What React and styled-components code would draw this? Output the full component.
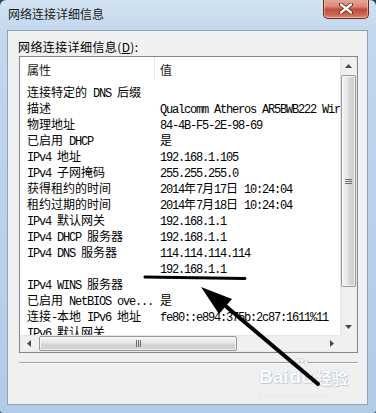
import React from 'react';
import styled, { createGlobalStyle } from 'styled-components';

const CJK = `"Noto Sans CJK SC", "Microsoft YaHei", sans-serif`;
const MONO = `"Liberation Mono", "DejaVu Sans Mono", monospace`;

const GlobalStyle = createGlobalStyle`
  html, body { margin: 0; padding: 0; background: #34414f; }
  body { width: 376px; height: 413px; overflow: hidden; }
`;

const Window = styled.div`
  position: relative;
  width: 376px;
  height: 413px;
  box-sizing: border-box;
  display: flex;
  flex-direction: column;
  background: linear-gradient(180deg, #d4e3f3 0%, #c3d7ed 30px, #b2cbe7 100%);
  border-radius: 6px 6px 3px 3px;
  overflow: hidden;
  font-family: ${CJK};
  color: #000;
`;

const TitleBar = styled.div`
  height: 30px;
  flex: none;
  display: flex;
  justify-content: space-between;
  align-items: flex-start;
  padding: 0 7px;
  box-sizing: border-box;
`;

const Title = styled.div`
  font-size: 12px;
  line-height: 14px;
  margin-top: 7px;
  margin-left: 1px;
  color: #1b1b1b;
`;

const CloseButton = styled.div`
  width: 46px;
  height: 20px;
  margin-top: -1px;
  box-sizing: border-box;
  border: 1px solid #6a2a24;
  border-top: none;
  border-radius: 0 0 5px 5px;
  background: linear-gradient(180deg, #e9a99a 0%, #d98877 40%, #c24d3a 55%, #cf6a55 85%, #e08e78 100%);
  box-shadow: inset 0 0 0 1px rgba(255, 220, 210, 0.45);
  display: flex;
  align-items: center;
  justify-content: center;
`;

const Panel = styled.div`
  flex: none;
  height: 375px;
  margin: 0 8px 0 7px;
  box-sizing: border-box;
  border: 1px solid #8ea3ba;
  background: #f0f0f0;
  padding: 9px 9px 0 11px;
  display: flex;
  flex-direction: column;
`;

const Label = styled.div`
  font-size: 12px;
  line-height: 14px;
  height: 14px;
  margin: 0 0 2px -1px;
  letter-spacing: 0.4px;
  white-space: pre;
`;

const Key = styled.span`
  text-decoration: underline;
`;

const ListBox = styled.div`
  height: 297px;
  box-sizing: border-box;
  border: 1px solid #828790;
  background: #fff;
  display: grid;
  grid-template-columns: 1fr 17px;
  grid-template-rows: 1fr 17px;
  overflow: hidden;
`;

const Content = styled.div`
  grid-column: 1;
  grid-row: 1;
  overflow: hidden;
  min-width: 0;
`;

const Header = styled.div`
  height: 23px;
  display: flex;
  font-size: 12px;
`;

const HeaderCell = styled.div`
  box-sizing: border-box;
  height: 23px;
  padding: 3px 0 0 ${p => (p.$first ? 7 : 5)}px;
  line-height: 20px;
  width: ${p => (p.$first ? '135px' : 'auto')};
  flex: ${p => (p.$first ? 'none' : '1')};
  border-right: ${p => (p.$first ? '1px solid #e3e6ea' : 'none')};
  color: #1a1a1a;
`;

const Rows = styled.div`
  padding-top: 2px;
`;

const Row = styled.div`
  display: flex;
  height: 16px;
  line-height: 16px;
  white-space: pre;
`;

const PropCell = styled.div`
  width: 135px;
  flex: none;
  box-sizing: border-box;
  padding-left: 7px;
`;

const ValueCell = styled.div`
  flex: none;
  padding-left: 5px;
`;

const Han = styled.span`
  font-family: ${CJK};
  font-size: 12px;
  line-height: 16px;
`;

const Latin = styled.span`
  font-family: ${MONO};
  font-size: 12px;
  line-height: 16px;
  letter-spacing: -1.2px;
`;

const VScroll = styled.div`
  grid-column: 2;
  grid-row: 1;
  display: flex;
  flex-direction: column;
  background: linear-gradient(90deg, #e4e4e4 0, #efefef 2px, #f1f1f1 15px, #e6e6e6 17px);
`;

const HScroll = styled.div`
  grid-column: 1;
  grid-row: 2;
  display: flex;
  flex-direction: row;
  background: linear-gradient(180deg, #e4e4e4 0, #efefef 2px, #f1f1f1 15px, #e6e6e6 17px);
`;

const Corner = styled.div`
  grid-column: 2;
  grid-row: 2;
  background: #f0f0f0;
`;

const ArrowBtn = styled.div`
  width: 17px;
  height: 17px;
  flex: none;
  display: flex;
  align-items: center;
  justify-content: center;
  margin-${p => p.$end}: auto;
`;

const Thumb = styled.div`
  flex: none;
  box-sizing: border-box;
  border: 1px solid #979797;
  border-radius: 2px;
  display: flex;
  align-items: center;
  justify-content: center;
  ${p =>
    p.$vertical
      ? `width: 15px; height: 212px; margin: 1px 0 0 1px;
         background: linear-gradient(90deg, #f4f4f4 0%, #e6e6e6 45%, #d6d6d6 55%, #cfcfcf 100%);`
      : `height: 15px; width: 198px; margin: 1px 0 0 2px;
         background: linear-gradient(180deg, #f4f4f4 0%, #e6e6e6 45%, #d6d6d6 55%, #cfcfcf 100%);`}
  box-shadow: inset 0 0 0 1px rgba(255, 255, 255, 0.7);
`;

const Separator = styled.div`
  margin-top: 9px;
  height: 0;
  border-top: 1px solid #a0a0a0;
  border-bottom: 1px solid #ffffff;
`;

const Overlay = styled.svg`
  position: absolute;
  left: 0;
  top: 0;
  width: 376px;
  height: 413px;
  pointer-events: none;
`;

const Watermark = styled.div`
  position: absolute;
  left: 259px;
  top: 367px;
  display: flex;
  flex-direction: column;
  align-items: flex-start;
  pointer-events: none;
  opacity: 0.85;
`;

const MarkLine = styled.div`
  display: flex;
  align-items: flex-end;
  font-family: "Liberation Sans", Arial, sans-serif;
  font-weight: bold;
  font-size: 19px;
  line-height: 20px;
  color: #ffffff;
  text-shadow: 0 0 1px #9fb2c4, 1px 1px 1px #b7c6d4;
`;

const MarkHan = styled.span`
  font-family: ${CJK};
  font-size: 16px;
  margin-left: 3px;
`;

const Paw = styled.span`
  position: relative;
  margin-left: 1px;
`;

const MarkSub = styled.div`
  margin-top: 4px;
  font-family: "Liberation Sans", Arial, sans-serif;
  font-size: 8px;
  line-height: 9px;
  letter-spacing: 0.3px;
  color: rgba(225, 235, 245, 0.9);
`;

const HAN_RE = /[\u2E80-\u9FFF\uFF00-\uFFEF]/;
const splitRuns = s => s.match(/[\u2E80-\u9FFF\uFF00-\uFFEF]+|[^\u2E80-\u9FFF\uFF00-\uFFEF]+/g) || [];

const Mixed = ({ text }) =>
  splitRuns(text).map((r, i) =>
    HAN_RE.test(r[0]) ? <Han key={i}>{r}</Han> : <Latin key={i}>{r}</Latin>
  );

const Tri = ({ dir }) => {
  const pts = {
    up: '0,4 3.5,0 7,4',
    down: '0,0 7,0 3.5,4',
    left: '4,0 4,7 0,3.5',
    right: '0,0 0,7 4,3.5',
  }[dir];
  const v = dir === 'up' || dir === 'down';
  return (
    <svg width={v ? 7 : 4} height={v ? 4 : 7} viewBox={v ? '0 0 7 4' : '0 0 4 7'}>
      <polygon points={pts} fill="#4a4a4a" />
    </svg>
  );
};

const Grip = ({ vertical }) =>
  vertical ? (
    <svg width="7" height="7" viewBox="0 0 7 7">
      <path d="M0 1.5h7M0 3.5h7M0 5.5h7" stroke="#6d6d6d" strokeWidth="1" />
    </svg>
  ) : (
    <svg width="7" height="7" viewBox="0 0 7 7">
      <path d="M1.5 0v7M3.5 0v7M5.5 0v7" stroke="#6d6d6d" strokeWidth="1" />
    </svg>
  );

const rows = [
  ['连接特定的 DNS 后缀', ''],
  ['描述', 'Qualcomm Atheros AR5BWB222 Wireless Network Adapter'],
  ['物理地址', '84-4B-F5-2E-98-69'],
  ['已启用 DHCP', '是'],
  ['IPv4 地址', '192.168.1.105'],
  ['IPv4 子网掩码', '255.255.255.0'],
  ['获得租约的时间', '2014年7月17日 10:24:04'],
  ['租约过期的时间', '2014年7月18日 10:24:04'],
  ['IPv4 默认网关', '192.168.1.1'],
  ['IPv4 DHCP 服务器', '192.168.1.1'],
  ['IPv4 DNS 服务器', '114.114.114.114'],
  ['', '192.168.1.1'],
  ['IPv4 WINS 服务器', ''],
  ['已启用 NetBIOS ove...', '是'],
  ['连接-本地 IPv6 地址', 'fe80::e894:375b:2c87:1611%11'],
  ['IPv6 默认网关', ''],
];

export default function App() {
  return (
    <>
      <GlobalStyle />
      <Window>
        <TitleBar>
          <Title>网络连接详细信息</Title>
          <CloseButton>
            <svg width="14" height="11" viewBox="0 0 14 11">
              <path d="M2 1.5L12 9.5M12 1.5L2 9.5" stroke="#5a1f18" strokeWidth="4" strokeLinecap="round" />
              <path d="M2 1.5L12 9.5M12 1.5L2 9.5" stroke="#ffffff" strokeWidth="2.3" strokeLinecap="round" />
            </svg>
          </CloseButton>
        </TitleBar>
        <Panel>
          <Label>
            网络连接详细信息(<Key>D</Key>):
          </Label>
          <ListBox>
            <Content>
              <Header>
                <HeaderCell $first>属性</HeaderCell>
                <HeaderCell>值</HeaderCell>
              </Header>
              <Rows>
                {rows.map(([k, v], i) => (
                  <Row key={i}>
                    <PropCell>
                      <Mixed text={k} />
                    </PropCell>
                    <ValueCell>
                      <Mixed text={v} />
                    </ValueCell>
                  </Row>
                ))}
              </Rows>
            </Content>
            <VScroll>
              <ArrowBtn>
                <Tri dir="up" />
              </ArrowBtn>
              <Thumb $vertical>
                <Grip vertical />
              </Thumb>
              <ArrowBtn $end="top">
                <Tri dir="down" />
              </ArrowBtn>
            </VScroll>
            <HScroll>
              <ArrowBtn>
                <Tri dir="left" />
              </ArrowBtn>
              <Thumb>
                <Grip />
              </Thumb>
              <ArrowBtn $end="left">
                <Tri dir="right" />
              </ArrowBtn>
            </HScroll>
            <Corner />
          </ListBox>
          <Separator />
        </Panel>
        <Watermark>
          <MarkLine>
            Bai
            <Paw>
              <svg width="20" height="20" viewBox="0 0 20 20" style={{ position: 'absolute', left: -1, top: -9 }}>
                <g fill="#ffffff" stroke="#b3c3d2" strokeWidth="0.6">
                  <ellipse cx="4" cy="5" rx="2" ry="2.6" />
                  <ellipse cx="8.5" cy="2.8" rx="2" ry="2.6" />
                  <ellipse cx="13" cy="2.8" rx="2" ry="2.6" />
                  <ellipse cx="17" cy="5" rx="2" ry="2.6" />
                </g>
              </svg>
              du
            </Paw>
            <MarkHan>经验</MarkHan>
          </MarkLine>
          <MarkSub>jingyan.baidu.com</MarkSub>
        </Watermark>
        <Overlay viewBox="0 0 376 413">
          <path d="M145 277 L245 278.5" stroke="#000" strokeWidth="3" strokeLinecap="round" />
          <path d="M318 384 L222 303" stroke="#000" strokeWidth="4" strokeLinecap="round" />
          <polygon points="201,287 232,299 219,314" fill="#000" />
        </Overlay>
      </Window>
    </>
  );
}
